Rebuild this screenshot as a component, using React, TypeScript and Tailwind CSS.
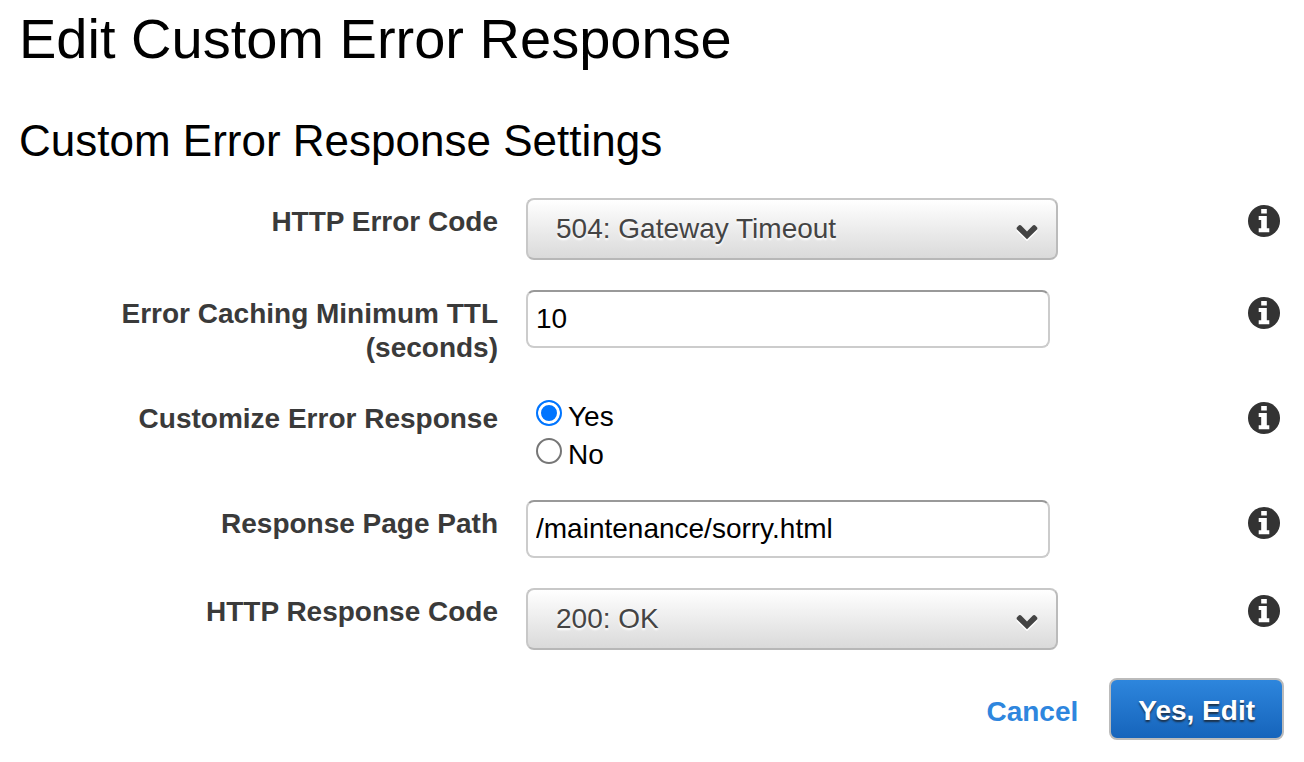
import { useState, type ReactNode } from "react";

function InfoButton({ topic }: { topic: string }) {
  return (
    <button type="button" aria-label={`About ${topic}`} className="mt-[7px] h-8 w-8 cursor-pointer">
      <svg viewBox="0 0 32 32" className="block h-8 w-8" aria-hidden="true">
        <circle cx="16" cy="16" r="16" fill="#333333" />
        <path
          fill="#ffffff"
          d="M13.2 4h5.6v4.4h-5.6zM10.7 11h8.1v12.2h2.5v4H10.7v-4h2.5V15h-2.5z"
        />
      </svg>
    </button>
  );
}

function Row({ label, htmlFor, children }: { label: string; htmlFor?: string; children: ReactNode }) {
  const labelClass = "pt-[7px] text-right font-bold leading-[34px] text-[#3a3a3a]";
  return (
    <div className="grid grid-cols-[minmax(0,478fr)_minmax(0,694fr)_32px] items-start gap-x-7">
      {htmlFor ? (
        <label htmlFor={htmlFor} className={labelClass}>
          {label}
        </label>
      ) : (
        <span id="customize-label" className={labelClass}>
          {label}
        </span>
      )}
      {children}
      <InfoButton topic={label} />
    </div>
  );
}

function Select({ id, options }: { id: string; options: string[] }) {
  return (
    <div className="relative w-full max-w-[532px]">
      <select
        id={id}
        className="block h-[62px] w-full appearance-none rounded-lg border-2 border-[#c8c8c8] border-r-[#bbbbbb] border-b-[#b7b7b7] bg-linear-to-b from-white to-[#dadada] pr-16 pl-7 text-[#444444] [text-shadow:0_2px_2px_#ffffff]"
      >
        {options.map((option) => (
          <option key={option}>{option}</option>
        ))}
      </select>
      <svg
        viewBox="0 0 22 16"
        aria-hidden="true"
        className="pointer-events-none absolute top-[26px] right-5 h-4 w-[22px] drop-shadow-[0_2px_0_#ffffff]"
      >
        <path
          d="M3 1.3Q4.2.6 5.4 1.7L11 7.5l5.6-5.8Q17.8.6 19 1.3l2 2q.8 1.2 0 2.2L11 15.2 1 5.5q-.8-1 0-2.2z"
          fill="#444444"
        />
      </svg>
    </div>
  );
}

function TextField({ id, initial }: { id: string; initial: string }) {
  return (
    <input
      id={id}
      type="text"
      defaultValue={initial}
      className="block h-[58px] w-full max-w-[524px] rounded-lg border-2 border-[#cccccc] border-t-[#999999] bg-white px-2 text-black"
    />
  );
}

export default function App() {
  const [customize, setCustomize] = useState("Yes");

  return (
    <main className="min-h-screen bg-white px-[18px] pt-[7px] pb-5 font-['Liberation_Sans',Arial,sans-serif] text-[28px] text-black">
      <h1 className="pl-px text-[56px] leading-[64px]">Edit Custom Error Response</h1>
      <form onSubmit={(event) => event.preventDefault()}>
        <h2 className="mt-11 pl-px text-[44px] leading-[52px]">Custom Error Response Settings</h2>
        <div className="mt-[31px] flex flex-col gap-[30px] pr-1.5 pl-0.5">
          <Row label="HTTP Error Code" htmlFor="error-code">
            <Select
              id="error-code"
              options={["504: Gateway Timeout", "503: Service Unavailable", "502: Bad Gateway", "500: Internal Server Error"]}
            />
          </Row>
          <Row label="Error Caching Minimum TTL (seconds)" htmlFor="min-ttl">
            <TextField id="min-ttl" initial="10" />
          </Row>
          <Row label="Customize Error Response">
            <div role="radiogroup" aria-labelledby="customize-label" className="-mb-0.5 flex flex-col items-start gap-1 pt-[5px] pl-2.5">
              {["Yes", "No"].map((value) => (
                <label key={value} className="flex items-start gap-1.5 leading-[34px]">
                  <input
                    type="radio"
                    name="customize"
                    value={value}
                    checked={customize === value}
                    onChange={() => setCustomize(value)}
                    className="h-[26px] w-[26px] appearance-none rounded-full border-2 border-[#767676] bg-white checked:border-[#0075ff] checked:bg-[#0075ff] checked:shadow-[inset_0_0_0_3px_#ffffff]"
                  />
                  {value}
                </label>
              ))}
            </div>
          </Row>
          <Row label="Response Page Path" htmlFor="page-path">
            <TextField id="page-path" initial="/maintenance/sorry.html" />
          </Row>
          <Row label="HTTP Response Code" htmlFor="response-code">
            <Select id="response-code" options={["200: OK", "404: Not Found", "503: Service Unavailable"]} />
          </Row>
        </div>
        <div className="mt-7 flex items-center justify-end gap-[31px] pr-0.5 font-bold">
          <a href="#cancel" className="pt-1.5 text-[#2e86de]">
            Cancel
          </a>
          <button
            type="submit"
            className="h-[62px] cursor-pointer rounded-lg border-2 border-[#bbbbbb] bg-linear-to-b from-[#2e87de] to-[#1563ba] px-[27px] pt-1 bg-origin-border text-white [text-shadow:0_2px_2px_#1c2f45]"
          >
            Yes, Edit
          </button>
        </div>
      </form>
    </main>
  );
}
